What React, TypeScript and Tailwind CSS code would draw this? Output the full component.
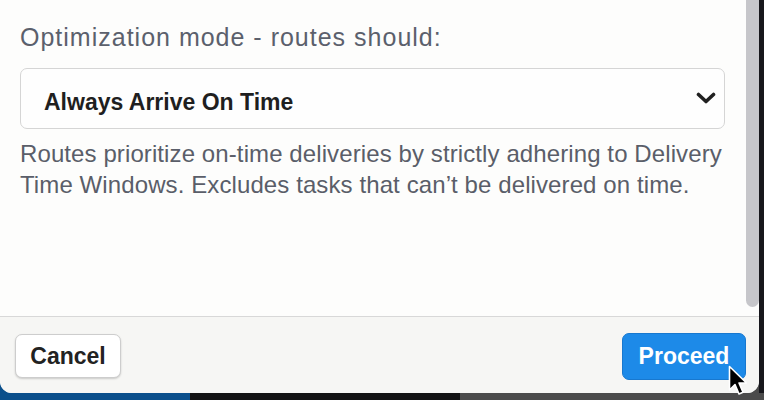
import React from "react";

export default function App() {
  return (
    <div className="relative w-[764px] h-[400px] flex flex-col overflow-hidden bg-[#17171b] font-['Liberation_Sans',Arial,sans-serif]">
      <div className="relative z-10 flex h-[393px] shrink-0">
        <div className="w-[759px] h-full bg-[#fdfdfc] rounded-b-[12px] flex flex-col overflow-hidden">
          <div className="h-[317px] shrink-0 flex border-b border-[#d8d8d8]">
            <div className="flex-1 pl-[20px] pr-[20px] pt-[23px]">
              <div className="text-[25px] leading-[28px] tracking-[1px] text-[#5b606c]">
                Optimization mode - routes should:
              </div>
              <div className="mt-[17px] mr-[1px] h-[61px] border border-[#d5d5d5] rounded-[7px] bg-[#fefefe] flex items-center justify-between pl-[23px] pr-[8px]">
                <span className="pt-[7px] text-[23px] leading-[26px] font-bold text-[#1f1f1f]">
                  Always Arrive On Time
                </span>
                <svg width="20" height="12" viewBox="0 0 20 12" className="-mt-[1px]">
                  <path
                    d="M2.5 2.5 L10 9.5 L17.5 2.5"
                    fill="none"
                    stroke="#202020"
                    strokeWidth="3.6"
                    strokeLinecap="round"
                    strokeLinejoin="round"
                  />
                </svg>
              </div>
              <p className="mt-[10px] text-[24px] leading-[30.5px] tracking-[0.1px] text-[#5a5e69]">
                Routes prioritize on-time deliveries by strictly adhering to Delivery Time Windows. Excludes tasks that can’t be delivered on time.
              </p>
            </div>
            <div className="w-[13px] h-full">
              <div className="h-[307px] bg-[#c6c6ca] rounded-b-[7px]" />
            </div>
          </div>
          <div className="flex-1 bg-[#f6f6f4] flex items-center justify-between pl-[15px] pr-[13px] pt-[2px]">
            <button className="w-[106px] h-[44px] bg-white border border-[#cdcdcd] rounded-[7px] shadow-[0_1px_2px_rgba(0,0,0,0.18)] text-[23px] font-bold text-[#222222] flex items-center justify-center">
              Cancel
            </button>
            <button className="w-[124px] h-[47px] bg-[#1d8ae8] border border-[#1878cf] rounded-[7px] text-[23px] font-bold text-white flex items-center justify-center">
              Proceed
            </button>
          </div>
        </div>
        <div className="flex-1 bg-[#17171c]" />
      </div>
      <div className="h-[20px] -mt-[13px] flex shrink-0">
        <div className="w-[190px] bg-[#0b4f8b]" />
        <div className="w-[270px] bg-[#131313]" />
        <div className="flex-1 bg-[#4b4b4b]" />
      </div>
      <svg
        className="absolute left-[728px] top-[365px] z-20"
        width="22"
        height="34"
        viewBox="0 0 22 34"
      >
        <path
          d="M1.5 1.5 L1.5 25 L7 19.5 L11 29 L15 27.3 L11 18 L18.5 18 Z"
          fill="#000"
          stroke="#fff"
          strokeWidth="1.6"
          strokeLinejoin="round"
        />
      </svg>
    </div>
  );
}
